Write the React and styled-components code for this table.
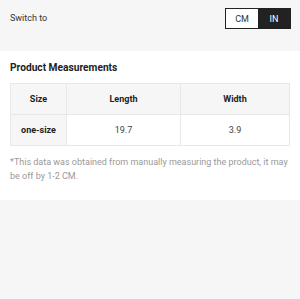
import React, { useState } from "react";
import styled, { createGlobalStyle } from "styled-components";

const Global = createGlobalStyle`
  html, body { margin: 0; padding: 0; background: #f6f6f6; }
  body { font-family: Roboto, "Noto Sans", Arial, sans-serif; color: #222; }
`;

const TopBar = styled.div`
  height: 51px;
  box-sizing: border-box;
  padding: 8px 9px 0 10px;
  display: flex;
  justify-content: space-between;
  align-items: flex-start;
  background: #f6f6f6;
`;

const Label = styled.span`
  font-size: 9px;
  color: #333;
  line-height: 21px;
`;

const Toggle = styled.div`
  display: flex;
  border: 1px solid #222;
  height: 21px;
  box-sizing: border-box;
`;

const ToggleBtn = styled.button`
  width: 32px;
  border: none;
  padding: 0;
  margin: 0;
  font-family: inherit;
  font-size: 9px;
  background: ${(p) => (p.$active ? "#222" : "#fff")};
  color: ${(p) => (p.$active ? "#fff" : "#333")};
  cursor: pointer;
`;

const Section = styled.div`
  background: #fff;
  padding: 10px 10px 17px 10px;
`;

const Title = styled.h3`
  margin: 0 0 8px 0;
  font-size: 10.2px;
  font-weight: 700;
  line-height: 14px;
  color: #222;
`;

const Table = styled.table`
  width: 100%;
  border-collapse: collapse;
  font-size: 9px;
`;

const Cell = styled.td`
  border: 1px solid #e8e8e8;
  height: 30px;
  padding: 0;
  text-align: center;
  font-weight: ${(p) => (p.$bold ? 700 : 400)};
  background: ${(p) => (p.$gray ? "#f6f6f6" : "#fff")};
  color: ${(p) => (p.$bold ? "#222" : "#444")};
  width: ${(p) => p.$w || "auto"};
`;

const Note = styled.p`
  margin: 9px 0 0 0;
  font-size: 9px;
  line-height: 14px;
  color: #999;
`;

export default function App() {
  const [unit, setUnit] = useState("IN");
  const data = unit === "IN" ? ["19.7", "3.9"] : ["50", "10"];
  return (
    <>
      <Global />
      <TopBar>
        <Label>Switch to</Label>
        <Toggle>
          <ToggleBtn $active={unit === "CM"} onClick={() => setUnit("CM")}>CM</ToggleBtn>
          <ToggleBtn $active={unit === "IN"} onClick={() => setUnit("IN")}>IN</ToggleBtn>
        </Toggle>
      </TopBar>
      <Section>
        <Title>Product Measurements</Title>
        <Table>
          <tbody>
            <tr>
              <Cell $bold $gray $w="55px">Size</Cell>
              <Cell $bold $gray $w="113px">Length</Cell>
              <Cell $bold $gray>Width</Cell>
            </tr>
            <tr>
              <Cell $bold $gray>one-size</Cell>
              <Cell>{data[0]}</Cell>
              <Cell>{data[1]}</Cell>
            </tr>
          </tbody>
        </Table>
        <Note>*This data was obtained from manually measuring the product, it may be off by 1-2 CM.</Note>
      </Section>
    </>
  );
}
